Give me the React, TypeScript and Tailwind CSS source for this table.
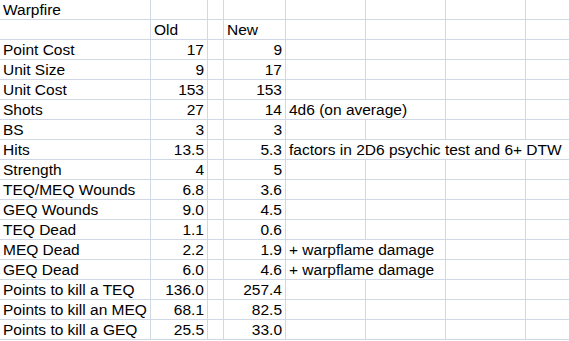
const rows: [string, string, string, string, number][] = [
  ["Point Cost", "17", "9", "", 0],
  ["Unit Size", "9", "17", "", 0],
  ["Unit Cost", "153", "153", "", 0],
  ["Shots", "27", "14", "4d6 (on average)", 2],
  ["BS", "3", "3", "", 0],
  ["Hits", "13.5", "5.3", "factors in 2D6 psychic test and 6+ DTW", 4],
  ["Strength", "4", "5", "", 0],
  ["TEQ/MEQ Wounds", "6.8", "3.6", "", 0],
  ["GEQ Wounds", "9.0", "4.5", "", 0],
  ["TEQ Dead", "1.1", "0.6", "", 0],
  ["MEQ Dead", "2.2", "1.9", "+ warpflame damage", 2],
  ["GEQ Dead", "6.0", "4.6", "+ warpflame damage", 2],
  ["Points to kill a TEQ", "136.0", "257.4", "", 0],
  ["Points to kill an MEQ", "68.1", "82.5", "", 0],
  ["Points to kill a GEQ", "25.5", "33.0", "", 0],
];

const cell = "h-5 border-b border-r border-[#d0d7e5] leading-[19px] whitespace-nowrap overflow-visible";

function Tail({ note, span }: { note: string; span: number }) {
  // columns E..H; a note spills over the next cells and hides their gridlines
  if (span === 4)
    return <div className="h-5 flex-1 border-b border-[#d0d7e5] leading-[19px] pl-[3px] whitespace-nowrap">{note}</div>;
  if (span === 2)
    return (
      <>
        <div className={`${cell} w-[160px] pl-[3px]`}>{note}</div>
        <div className={`${cell} w-[80px]`} />
        <div className="h-5 flex-1 border-b border-[#d0d7e5]" />
      </>
    );
  return (
    <>
      <div className={`${cell} w-[80px]`} />
      <div className={`${cell} w-[80px]`} />
      <div className={`${cell} w-[80px]`} />
      <div className="h-5 flex-1 border-b border-[#d0d7e5]" />
    </>
  );
}

export default function App() {
  return (
    <div
      className="w-[569px] h-[341px] overflow-hidden bg-white text-black text-[15.5px]"
      style={{ fontFamily: '"Liberation Sans", Arial, sans-serif' }}
    >
      <div className="flex">
        <div className={`${cell} w-[151px] pl-[3px]`}>Warpfire</div>
        <div className={`${cell} w-[57px]`} />
        <div className={`${cell} w-[16px]`} />
        <div className={`${cell} w-[62px]`} />
        <Tail note="" span={0} />
      </div>
      <div className="flex">
        <div className={`${cell} w-[151px]`} />
        <div className={`${cell} w-[57px] pl-[3px]`}>Old</div>
        <div className={`${cell} w-[16px]`} />
        <div className={`${cell} w-[62px] pl-[3px]`}>New</div>
        <Tail note="" span={0} />
      </div>
      {rows.map(([label, oldV, newV, note, span]) => (
        <div key={label} className="flex">
          <div className={`${cell} w-[151px] pl-[3px]`}>{label}</div>
          <div className={`${cell} w-[57px] pr-[3px] text-right`}>{oldV}</div>
          <div className={`${cell} w-[16px]`} />
          <div className={`${cell} w-[62px] pr-[3px] text-right`}>{newV}</div>
          <Tail note={note} span={span} />
        </div>
      ))}
    </div>
  );
}
